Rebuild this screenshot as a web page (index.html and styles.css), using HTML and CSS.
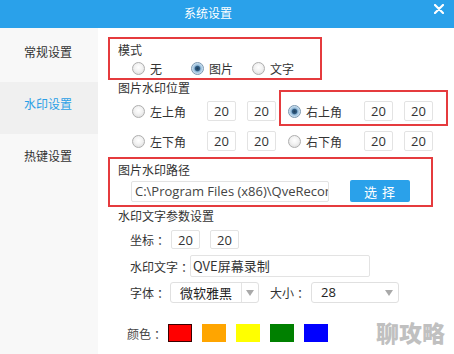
FILE: index.html
```html
<!DOCTYPE html>
<html lang="zh">
<head>
<meta charset="utf-8">
<title>系统设置</title>
<link rel="stylesheet" href="styles.css">
</head>
<body>
<div class="win">
  <header class="titlebar">
    <span class="title">系统设置</span>
    <svg class="close" width="10" height="10" viewBox="0 0 10 10"><path d="M1 1 L9 9 M9 1 L1 9" stroke="#fff" stroke-width="2.2" stroke-linecap="round"/></svg>
  </header>
  <div class="main">
    <nav class="side">
      <div class="nav-item">常规设置</div>
      <div class="nav-item active">水印设置</div>
      <div class="nav-item">热键设置</div>
    </nav>
    <section class="content">
      <div class="box mode">
        <div class="box-label">模式</div>
        <div class="mode-row">
          <span class="opt"><span class="radio"></span>无</span>
          <span class="opt"><span class="radio on"></span>图片</span>
          <span class="opt"><span class="radio"></span>文字</span>
        </div>
      </div>

      <div class="sub-label pos-label">图片水印位置</div>
      <div class="pos-row">
        <div class="pos-group">
          <span class="pos-opt"><span class="radio"></span>左上角</span>
          <span class="num">20</span><span class="num">20</span>
        </div>
        <div class="pos-group right hl">
          <span class="pos-opt"><span class="radio on"></span>右上角</span>
          <span class="num">20</span><span class="num">20</span>
        </div>
      </div>
      <div class="pos-row">
        <div class="pos-group">
          <span class="pos-opt"><span class="radio"></span>左下角</span>
          <span class="num">20</span><span class="num">20</span>
        </div>
        <div class="pos-group right">
          <span class="pos-opt wide"><span class="radio"></span>右下角</span>
          <span class="num">20</span><span class="num">20</span>
        </div>
      </div>

      <div class="box path">
        <div class="box-label">图片水印路径</div>
        <div class="path-row">
          <span class="path-input">C:\Program Files (x86)\QveRecord</span>
          <span class="btn">选 择</span>
        </div>
      </div>

      <div class="sub-label">水印文字参数设置</div>
      <div class="param coords">
        <span class="plabel">坐标<span class="colon">：</span></span>
        <span class="num small">20</span><span class="num small">20</span>
      </div>
      <div class="param wmtext">
        <span class="plabel">水印文字<span class="colon">：</span></span>
        <span class="text-input">QVE屏幕录制</span>
      </div>
      <div class="param font">
        <span class="plabel">字体<span class="colon">：</span></span>
        <span class="select font-sel"><span class="sel-val">微软雅黑</span><span class="sel-arrow"></span></span>
        <span class="plabel size-label">大小<span class="colon">：</span></span>
        <span class="select size-sel"><span class="sel-val">28</span><span class="sel-arrow"></span></span>
      </div>
      <div class="param colors">
        <span class="plabel clabel">颜色<span class="colon">：</span></span>
        <span class="sw red"></span>
        <span class="sw orange"></span>
        <span class="sw yellow"></span>
        <span class="sw green"></span>
        <span class="sw blue"></span>
      </div>
    </section>
  </div>
  <div class="watermark">聊攻略</div>
</div>
</body>
</html>
```

FILE: styles.css
```css
* { box-sizing: border-box; }
html, body { margin: 0; padding: 0; }
body {
  width: 454px;
  height: 354px;
  overflow: hidden;
  background: #fff;
  font-family: "Noto Sans CJK SC", "Microsoft YaHei", sans-serif;
  font-size: 12px;
  color: #333;
}
.win { position: relative; width: 454px; height: 354px; }

.titlebar {
  height: 28px;
  background: #2aa1ea;
  display: flex;
  align-items: center;
}
.title {
  width: 416px;
  text-align: center;
  color: #fff;
  font-size: 12px;
  line-height: 28px;
  margin-top: -2px;
}
.close { margin-left: 18px; align-self: flex-start; margin-top: 4px; }

.main { display: flex; height: 326px; }
.side {
  width: 98px;
  background: #f8f8f8;
  padding-top: 2px;
}
.nav-item {
  height: 52px;
  line-height: 44px;
  padding-left: 24px;
  color: #333;
  font-size: 12px;
}
.nav-item.active { background: #f0f0f0; color: #2a9fe6; }

.content { flex: 1; padding: 9px 0 0 10px; }

.box { border: 2px solid #e53b3e; }
.box-label { line-height: 18px; padding-left: 8px; }
.mode { width: 214px; height: 43px; padding-top: 2px; }
.mode-row { display: flex; align-items: center; height: 19px; padding-left: 22px; }
.opt { display: flex; align-items: center; }
.opt:nth-child(1) { width: 59px; }
.opt:nth-child(2) { width: 61px; }

.radio {
  width: 13px;
  height: 13px;
  border-radius: 50%;
  border: 1px solid #aeaeae;
  background: radial-gradient(circle at 50% 40%, #ffffff 0%, #f2f2f2 45%, #d6d6d6 100%);
  margin-right: 5px;
  flex: none;
  position: relative;
}
.radio.on {
  border-color: #7a97b0;
  background: radial-gradient(circle, #1e3f5c 0%, #2f5a80 28%, #8fb8d8 42%, #dcebf6 75%, #f4f9fc 100%);
}

.sub-label { padding-left: 10px; line-height: 18px; }
.pos-label { line-height: 16px; height: 16px; }

.pos-row { display: flex; align-items: center; height: 30px; padding-left: 24px; }
.pos-group { display: flex; align-items: center; position: relative; }
.pos-group.right { margin-left: 12px; }
.pos-opt { display: flex; align-items: center; width: 75px; }
.pos-group.right .pos-opt { width: 76px; }
.hl { height: 30px; }
.hl::after {
  content: "";
  position: absolute;
  top: -6px;
  bottom: 0;
  left: -9px;
  right: -15px;
  border: 2px solid #e53b3e;
  pointer-events: none;
}

.num {
  width: 29px;
  height: 20px;
  border: 1px solid #e3e3e3;
  border-radius: 2px;
  display: flex;
  align-items: center;
  justify-content: center;
  font-family: "Open Sans", "Noto Sans CJK SC", sans-serif;
  font-size: 13px;
  color: #333;
}
.num + .num { margin-left: 11px; }

.path { width: 325px; height: 50px; margin-top: 1px; padding-top: 2px; }
.path-row { display: flex; align-items: center; height: 24px; padding-left: 21px; }
.path-input {
  width: 198px;
  height: 21px;
  border: 1px solid #e3e3e3;
  border-radius: 2px;
  padding-left: 3px;
  line-height: 19px;
  white-space: nowrap;
  overflow: hidden;
  text-overflow: clip;
  font-family: "Open Sans", "Noto Sans CJK SC", sans-serif;
  font-size: 13px;
  color: #444;
}
.btn {
  margin-left: 21px;
  width: 60px;
  height: 22px;
  background: #2aa1ea;
  color: #fff;
  border-radius: 2px;
  display: flex;
  align-items: center;
  justify-content: center;
  font-size: 13px;
  letter-spacing: 1px;
}

.param { display: flex; align-items: center; padding-left: 22px; }
.plabel { white-space: nowrap; flex: none; }
.colon { padding-left: 3px; }
.coords { height: 29px; }
.coords .plabel { width: 41px; }
.num.small { height: 19px; }
.num.small + .num.small { margin-left: 10px; }
.wmtext { height: 24px; }
.wmtext .plabel { width: 60px; }
.text-input {
  width: 180px;
  height: 22px;
  border: 1px solid #e3e3e3;
  border-radius: 2px;
  padding-left: 2px;
  line-height: 20px;
  font-size: 13px;
  color: #333;
}
.font { height: 28px; }
.font .plabel { width: 40px; }
.font .size-label { width: 41px; margin-left: 11px; }
.select {
  height: 21px;
  border: 1px solid #e0e0e0;
  border-radius: 3px;
  display: flex;
  align-items: stretch;
}
.font-sel { width: 89px; }
.size-sel { width: 88px; }
.sel-val {
  flex: 1;
  line-height: 19px;
  padding-left: 9px;
  font-size: 13px;
  color: #222;
}
.size-sel .sel-val { font-family: "Open Sans", sans-serif; }
.sel-arrow {
  width: 17px;
  border-left: 1px solid #e3e3e3;
  position: relative;
}
.sel-arrow::after {
  content: "";
  position: absolute;
  left: 4px;
  top: 7px;
  border-left: 4px solid transparent;
  border-right: 4px solid transparent;
  border-top: 6px solid #a9a9a9;
}
.size-sel .sel-arrow { border-left: none; }

.colors { height: 26px; margin-top: 14px; padding-left: 19px; }
.clabel { width: 41px; color: #444; }
.sw { width: 24px; height: 18px; flex: none; }
.sw + .sw { margin-left: 10px; }
.red { background: #ff0000; border: 1px solid #3a0000; }
.orange { background: #ffa500; }
.yellow { background: #ffff00; }
.green { background: #008000; }
.blue { background: #0000ff; }

.watermark {
  position: absolute;
  left: 376px;
  top: 316px;
  font-size: 23px;
  font-weight: 900;
  color: #c0c0c0;
  line-height: 32px;
}
```
